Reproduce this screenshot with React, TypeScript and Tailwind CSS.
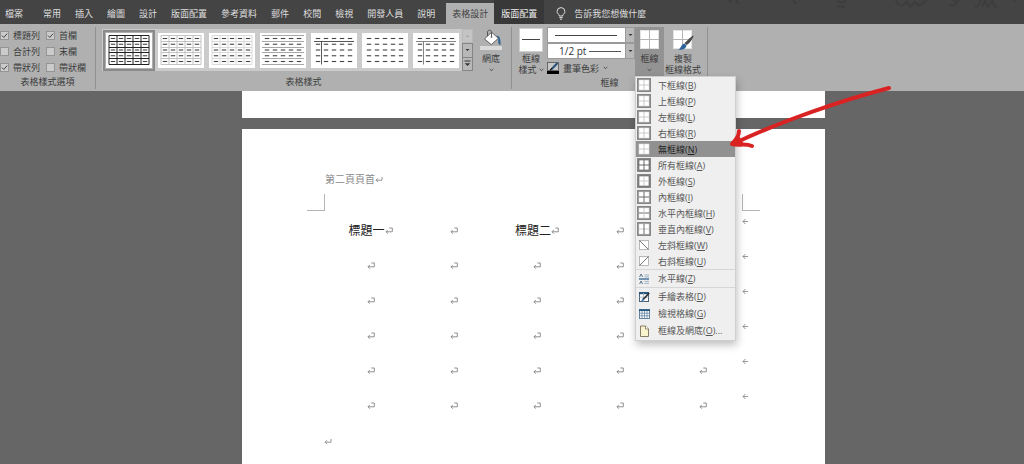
import { useState } from 'react'
import type { ReactNode } from 'react'

const MAIN_TABS = ['常用', '插入', '繪圖', '設計', '版面配置', '參考資料', '郵件', '校閱', '檢視', '開發人員', '說明']

const STYLE_OPTIONS = [
  { label: '標題列', checked: true },
  { label: '首欄', checked: true },
  { label: '合計列', checked: false },
  { label: '末欄', checked: false },
  { label: '帶狀列', checked: true },
  { label: '帶狀欄', checked: false },
]

type Grid = 'full' | 'light' | 'lighter' | 'rows' | 'header-first' | 'none' | 'header-first-light'

const TABLE_STYLES: Grid[] = ['full', 'light', 'lighter', 'rows', 'header-first', 'none', 'header-first-light']

type BorderKind = 'dotted' | 'outer' | 'all' | 'inner' | 'horizontal' | 'vertical' | 'none'

interface MenuEntry {
  label: string
  accessKey: string
  suffix?: string
  icon: ReactNode
  highlighted?: boolean
}

// Framed 2x2 cell icon used by most border commands
function BorderIcon({ kind }: { kind: BorderKind }) {
  const strong = '#5c5c5c'
  const weak = '#c4c4c4'
  const h = kind === 'all' || kind === 'inner' || kind === 'horizontal' ? strong : weak
  const v = kind === 'all' || kind === 'inner' || kind === 'vertical' ? strong : weak
  const edge = kind === 'all' || kind === 'outer' ? strong : '#e2e2e2'
  return (
    <svg width="14" height="14" viewBox="0 0 14 14" aria-hidden="true">
      <rect width="14" height="14" fill={kind === 'none' ? '#919191' : '#868686'} />
      <rect x="2" y="2" width="10" height="10" fill="#fff" stroke={edge} strokeWidth="0.6" />
      <path d="M2 7h10" stroke={h} strokeWidth="0.9" />
      <path d="M7 2v10" stroke={v} strokeWidth="0.9" />
    </svg>
  )
}

function DiagonalIcon({ down }: { down: boolean }) {
  return (
    <svg width="14" height="14" viewBox="0 0 14 14" aria-hidden="true">
      <rect x="2.5" y="2.5" width="9" height="9" fill="#fff" stroke="#a9a9a9" strokeWidth="0.8" />
      <path d={down ? 'M2.5 2.5l9 9' : 'M11.5 2.5l-9 9'} stroke="#666" strokeWidth="0.9" />
    </svg>
  )
}

function HorizontalLineIcon() {
  return (
    <svg width="14" height="14" viewBox="0 0 14 14" aria-hidden="true">
      <path d="M2 7h10" stroke="#2f6291" strokeWidth="1.3" />
      <path d="M2.6 5l1.5-3 1.5 3M2.6 12l1.5-3 1.5 3" fill="none" stroke="#47688a" strokeWidth="0.9" />
      <path d="M7.5 3H12M7.5 4.9H12M7.5 9.4H12M7.5 11.4H12" stroke="#8ba3ba" strokeWidth="0.8" />
    </svg>
  )
}

function DrawTableIcon() {
  return (
    <svg width="14" height="14" viewBox="0 0 14 14" aria-hidden="true">
      <rect x="2.5" y="2.5" width="9" height="9" fill="#fff" stroke="#4d6274" />
      <path d="M2 3.2h10" stroke="#24577f" strokeWidth="2" />
      <path d="M2.5 7.2h9M6.5 3v8.5" stroke="#9eb1c2" strokeWidth="0.8" />
      <path d="M12.2 3L6 9.6" stroke="#333" strokeWidth="1.7" />
      <path d="M6.5 9L4.8 10.9" stroke="#2a72b5" strokeWidth="1.4" />
    </svg>
  )
}

function GridlinesIcon() {
  return (
    <svg width="14" height="14" viewBox="0 0 14 14" aria-hidden="true">
      <rect x="2.5" y="2.5" width="10" height="9" fill="#fff" stroke="#527694" strokeWidth="0.9" />
      <path d="M2 3.2h11" stroke="#24577f" strokeWidth="1.7" />
      <path d="M5 4v7.5M7.5 4v7.5M10 4v7.5M3 6.2h9.5M3 8.8h9.5" stroke="#6287a5" strokeWidth="0.8" />
    </svg>
  )
}

function PageIcon() {
  return (
    <svg width="14" height="14" viewBox="0 0 14 14" aria-hidden="true">
      <path d="M3.5 2h5l3 3v7.5h-8z" fill="#fbf3cd" stroke="#77705a" strokeWidth="0.9" />
      <path d="M8.5 2v3h3" fill="#fff" stroke="#77705a" strokeWidth="0.8" />
    </svg>
  )
}

const MENU_SECTIONS: { roomy?: boolean; entries: MenuEntry[] }[] = [
  {
    entries: [
      { label: '下框線', accessKey: 'B', icon: <BorderIcon kind="dotted" /> },
      { label: '上框線', accessKey: 'P', icon: <BorderIcon kind="dotted" /> },
      { label: '左框線', accessKey: 'L', icon: <BorderIcon kind="dotted" /> },
      { label: '右框線', accessKey: 'R', icon: <BorderIcon kind="dotted" /> },
      { label: '無框線', accessKey: 'N', icon: <BorderIcon kind="none" />, highlighted: true },
      { label: '所有框線', accessKey: 'A', icon: <BorderIcon kind="all" /> },
      { label: '外框線', accessKey: 'S', icon: <BorderIcon kind="outer" /> },
      { label: '內框線', accessKey: 'I', icon: <BorderIcon kind="inner" /> },
    ],
  },
  {
    entries: [
      { label: '水平內框線', accessKey: 'H', icon: <BorderIcon kind="horizontal" /> },
      { label: '垂直內框線', accessKey: 'V', icon: <BorderIcon kind="vertical" /> },
      { label: '左斜框線', accessKey: 'W', icon: <DiagonalIcon down /> },
      { label: '右斜框線', accessKey: 'U', icon: <DiagonalIcon down={false} /> },
    ],
  },
  {
    roomy: true,
    entries: [{ label: '水平線', accessKey: 'Z', icon: <HorizontalLineIcon /> }],
  },
  {
    roomy: true,
    entries: [
      { label: '手繪表格', accessKey: 'D', icon: <DrawTableIcon /> },
      { label: '檢視格線', accessKey: 'G', icon: <GridlinesIcon /> },
      { label: '框線及網底', accessKey: 'O', suffix: '...', icon: <PageIcon /> },
    ],
  },
]

function Chevron() {
  return (
    <svg width="5" height="4" viewBox="0 0 5 4" aria-hidden="true">
      <path d="M0.7 1l1.8 1.6L4.3 1" fill="none" stroke="#444" strokeWidth="0.9" />
    </svg>
  )
}

// Faint doodles in the title area
function Doodles() {
  return (
    <svg className="ml-auto h-6 w-[310px]" viewBox="0 0 310 24" fill="none" stroke="#3d3d3d" strokeWidth="2" aria-hidden="true">
      <path d="M14 0l4 2M22 0l3 4M79 0l3 4M124 0c0 3 4 3 8 1M123 6l8 1M182 0c2 7 8 7 11 1l3 6 5-5 4 4 8-6" />
      <path d="M235 5c5 2 7-1 9-5M238 0l7 1M261 7c3 0 5-3 6-7M268 7l3-7 3 7 4-6 4 7M299 0l3 2" />
    </svg>
  )
}

function TabBar() {
  return (
    <header className="flex h-6 bg-[#444] text-[9px] leading-[14px] text-[#dedede]">
      <nav className="flex shrink-0 items-stretch" aria-label="功能區">
        <button className="pt-[3px] pr-[13px] pl-[5px]">檔案</button>
        {MAIN_TABS.map((tab) => (
          <button key={tab} className="px-[7px] pt-[3px]">
            {tab}
          </button>
        ))}
        <button className="mt-[3px] ml-1 bg-[#b0b0b0] px-1.5 text-[#404040]">表格設計</button>
        <button className="bg-[#383838] px-[7px] pt-[3px] text-[#eee]">版面配置</button>
        <button className="flex items-center gap-2 pt-[3px] pl-3">
          <svg width="10" height="13" viewBox="0 0 10 13" fill="none" stroke="#ddd" aria-hidden="true">
            <path d="M3.2 9V7.8C1.8 6.8 1.1 5.8 1.1 4.5a3.9 3.9 0 0 1 7.8 0c0 1.3-.7 2.3-2.1 3.3V9z" />
            <path d="M3.3 10.6h3.4M4 12.2h2" />
          </svg>
          告訴我您想做什麼
        </button>
      </nav>
      <Doodles />
    </header>
  )
}

function Group({ title, children }: { title: string; children: ReactNode }) {
  return (
    <section className="mt-[3px] mb-0.5 flex shrink-0 flex-col border-r border-[#919191]">
      <div className="flex h-[50px]">{children}</div>
      <h2 className="text-center leading-[14px]">{title}</h2>
    </section>
  )
}

function StyleOption({ label, checked }: { label: string; checked: boolean }) {
  const [on, setOn] = useState(checked)
  return (
    <label className="flex h-4 items-center gap-1">
      <span className="relative flex size-[9px]">
        <input
          type="checkbox"
          checked={on}
          onChange={() => setOn(!on)}
          className="size-[9px] appearance-none border border-[#949494] bg-[#cbcbcb]"
        />
        {on && (
          <svg className="pointer-events-none absolute inset-0" viewBox="0 0 9 9" fill="none" stroke="#444" aria-hidden="true">
            <path d="M2 4.6l1.8 1.8L7.2 2.6" />
          </svg>
        )}
      </span>
      {label}
    </label>
  )
}

function StyleThumb({ grid }: { grid: Grid }) {
  const cells = [0, 1, 2, 3, 4]
  const lineColor = grid === 'full' ? '#222' : grid === 'light' ? '#c2c2c2' : '#d9d9d9'
  const boxed = grid === 'full' || grid === 'light' || grid === 'lighter'
  const firstCol = grid === 'header-first' || grid === 'header-first-light'
  return (
    <svg width="46" height="35" viewBox="0 0 46 35" aria-hidden="true">
      <rect width="46" height="35" fill="#fff" />
      {boxed && (
        <path
          d="M3 2.5h40M3 8.5h40M3 14.5h40M3 19.5h40M3 25.5h40M3 31.5h40M3 2.5v29M11 2.5v29M19 2.5v29M27 2.5v29M35 2.5v29M43 2.5v29"
          stroke={lineColor}
          strokeWidth="1"
        />
      )}
      {grid === 'rows' && (
        <path d="M2 2.5h42M2 8.5h42M2 14.5h42M2 19.5h42M2 25.5h42M2 31.5h42" stroke="#8f8f8f" strokeWidth="0.8" />
      )}
      {firstCol && (
        <path d="M3 8.5h40M10.5 8.5v23" stroke={grid === 'header-first' ? '#444' : '#777'} strokeWidth="0.9" />
      )}
      {cells.map((r) =>
        cells.map((c) => (
          <path key={`${r}-${c}`} d={`M${4.8 + c * 8} ${5.5 + r * 5.75}h4.4`} stroke="#444" strokeWidth="1.1" />
        )),
      )}
    </svg>
  )
}

function StyleGallery() {
  return (
    <div className="mt-0.5 ml-1.5 flex h-[42px] bg-[#cbcbcb]">
      <div className="flex items-center gap-px px-px">
        {TABLE_STYLES.map((grid, i) => (
          <button
            key={grid}
            aria-label={`表格樣式 ${i + 1}`}
            className={`border-2 p-px ${i === 0 ? 'border-[#8a8a8a] bg-[#b0b0b0]' : '-mx-px border-transparent'}`}
          >
            <StyleThumb grid={grid} />
          </button>
        ))}
      </div>
      <div className="flex w-[11px] flex-col">
        <button aria-label="上一列" className="flex flex-1 items-center justify-center border border-[#b8b8b8] bg-[#c4c4c4]">
          <svg width="5" height="4" viewBox="0 0 5 4" fill="#a8a8a8"><path d="M0.5 3h4l-2-2z" /></svg>
        </button>
        <button aria-label="下一列" className="flex flex-1 items-center justify-center border border-[#858585] bg-[#b8b8b8]">
          <svg width="5" height="4" viewBox="0 0 5 4" fill="#333"><path d="M0.5 1h4l-2 2z" /></svg>
        </button>
        <button aria-label="其他" className="flex flex-1 items-center justify-center border border-t-0 border-[#858585] bg-[#b8b8b8]">
          <svg width="7" height="7" viewBox="0 0 7 7" fill="#333"><path d="M0.5 0.5h6v1h-6zM0.8 3.2h5.4L3.5 6z" /></svg>
        </button>
      </div>
    </div>
  )
}

function ShadingIcon() {
  return (
    <svg width="22" height="22" viewBox="0 0 22 22" aria-hidden="true">
      <rect y="17" width="22" height="4" fill="#d9d9d9" />
      <path d="M11.5 3.3l7 6-7.2 6.3L4.5 10z" fill="#fff" stroke="#555" strokeWidth="0.9" />
      <path d="M7.5 7V3c0-2.4 4-2.4 4 0v4.2" fill="none" stroke="#555" />
      <circle cx="11.5" cy="7.8" r="0.9" fill="#555" />
      <path d="M16.5 6.4c3 .4 4.3 2.4 4 9.6-2.6-.6-2.4-3-2.1-6.7z" fill="#2d5f8f" />
    </svg>
  )
}

function WindowIcon({ brush }: { brush?: boolean }) {
  return (
    <svg width="22" height="22" viewBox="0 0 22 22" aria-hidden="true">
      <rect x="1.5" y="1.5" width="18" height="18" fill="#fff" stroke="#e4e4e4" />
      <path d="M10.5 1v19M1 10.5h19" stroke="#b5b5b5" />
      {brush && (
        <>
          <path d="M21.5 6.5c.6 1-3.7 8-6.8 9.6l-2.2-1.9C14.5 12 20.8 5.7 21.5 6.500z" fill="#4a4a4a" />
          <path d="M12.3 14.5l2.3 2c-.6 3.3-4.6 5-8.3 4 2.6-.6 2.5-5 6-6z" fill="#2d629b" />
        </>
      )}
    </svg>
  )
}

function BordersMenu() {
  return (
    <div
      role="menu"
      className="absolute top-full left-0 z-10 w-[101px] border border-[#cfcfcf] bg-[#efefef] pb-px text-[#565656] shadow-[1px_4px_8px_rgba(0,0,0,0.25)]"
    >
      {MENU_SECTIONS.map((section, i) => (
        <div key={i} className={section.roomy ? 'border-t border-[#d6d6d6]' : ''}>
          {section.entries.map((entry) => (
            <button
              key={entry.accessKey}
              role="menuitem"
              className={`flex w-full items-center gap-[7px] pl-px text-left whitespace-nowrap ${
                section.roomy ? 'h-[17px]' : 'h-4'
              } ${entry.highlighted ? 'bg-[#919191] text-[#222]' : ''}`}
            >
              {entry.icon}
              <span>
                {entry.label}(<u>{entry.accessKey}</u>){entry.suffix}
              </span>
            </button>
          ))}
        </div>
      ))}
    </div>
  )
}

function LineSelect({ label, value, children }: { label: string; value: string; children: ReactNode }) {
  return (
    <div className="relative flex h-4 w-[88px] border border-[#9a9a9a] bg-white">
      <select aria-label={label} className="w-full appearance-none pl-[11px] text-[10px] leading-[14px] text-[#333]">
        <option>{value}</option>
      </select>
      {children}
      <span className="pointer-events-none absolute inset-y-0 right-0 flex w-[9px] items-center justify-center border-l border-[#9a9a9a] bg-[#b8b8b8]">
        <svg width="5" height="4" viewBox="0 0 5 4" fill="#333"><path d="M0.5 1h4l-2 2z" /></svg>
      </span>
    </div>
  )
}

function Ribbon() {
  const [menuOpen, setMenuOpen] = useState(true)

  return (
    <div className="flex h-[67px] bg-[#b0b0b0] text-[9px] leading-[11px] text-[#3c3c3c]">
      <Group title="表格樣式選項">
        <div className="grid grid-cols-[46px_49px] content-start">
          {STYLE_OPTIONS.map((option) => (
            <StyleOption key={option.label} {...option} />
          ))}
        </div>
      </Group>

      <Group title="表格樣式">
        <StyleGallery />
        <button className="mr-1.5 ml-1 flex w-7 flex-col items-center pt-0.5">
          <ShadingIcon />
          <span className="pt-0.5">網底</span>
          <span className="flex h-[11px] items-center"><Chevron /></span>
        </button>
      </Group>

      <Group title="框線">
        <button className="ml-1 flex w-[30px] flex-col items-center pt-px">
          <svg width="24" height="24" viewBox="0 0 24 24" aria-hidden="true">
            <rect x="0.5" y="0.5" width="23" height="23" fill="#fff" stroke="#d0d0d0" />
            <path d="M3 11.5h18" stroke="#444" />
          </svg>
          <span className="pt-px">框線</span>
          <span className="flex items-center gap-0.5 whitespace-nowrap">樣式<Chevron /></span>
        </button>

        <div className="ml-px flex flex-col">
          <LineSelect label="線條樣式" value="">
            <span className="pointer-events-none absolute top-[7px] right-[17px] h-px w-[62px] bg-[#444]" />
          </LineSelect>
          <LineSelect label="線條粗細" value="1/2 pt">
            <span className="pointer-events-none absolute top-[7px] right-[13px] h-px w-8 bg-[#555]" />
          </LineSelect>
          <button className="flex items-center gap-1 pt-[3px] whitespace-nowrap">
            <svg width="12" height="12" viewBox="0 0 12 12" aria-hidden="true">
              <rect x="0.5" y="0.5" width="11" height="8" fill="#c7c7c7" stroke="#555" strokeWidth="0.8" />
              <path d="M10.5 1L4.5 7.2" stroke="#24517a" strokeWidth="2" />
              <path d="M5 6.5L3 8.3" stroke="#111" strokeWidth="1.2" />
              <rect y="9" width="12" height="3" fill="#000" />
            </svg>
            畫筆色彩
            <Chevron />
          </button>
        </div>

        <div className="relative h-[49px]">
          <button
            aria-haspopup="menu"
            aria-expanded={menuOpen}
            onClick={() => setMenuOpen(!menuOpen)}
            className="flex h-full w-[29px] flex-col items-center bg-[#939393] pt-0.5"
          >
            <WindowIcon />
            <span className="pt-0.5">框線</span>
            <span className="flex h-[11px] items-center"><Chevron /></span>
          </button>
          {menuOpen && <BordersMenu />}
        </div>

        <button className="mr-[5px] flex w-[38px] flex-col items-center pt-0.5">
          <WindowIcon brush />
          <span className="pt-0.5">複製</span>
          <span className="whitespace-nowrap">框線格式</span>
        </button>
      </Group>
    </div>
  )
}

// Paragraph mark
function ParagraphMark() {
  return (
    <svg className="inline-block" width="8" height="8" viewBox="0 0 8 8" fill="none" stroke="#8a8a8a" strokeWidth="0.9" aria-hidden="true">
      <path d="M7 2v3.2H1M3 3.2L1 5.200l2 2" />
    </svg>
  )
}

// End-of-cell mark
function CellMark() {
  return (
    <svg className="inline-block" width="8" height="8" viewBox="0 0 8 8" fill="none" stroke="#858585" strokeWidth="0.9" aria-hidden="true">
      <path d="M4.3 1h3v3.8H1M2.8 3L1 4.8l1.8 1.9" />
    </svg>
  )
}

function RowMark() {
  return (
    <svg width="6" height="7" viewBox="0 0 6 7" fill="none" stroke="#8a8a8a" strokeWidth="0.9" aria-hidden="true">
      <path d="M6 3.5H1M3.4 1L1 3.5 3.4 6" />
    </svg>
  )
}

const HEADINGS = ['標題一', '', '標題二', '', '']
const BODY_ROWS = [1, 2, 3, 4, 5]

function DocumentPage() {
  return (
    <article className="mt-[11px] flex w-[583px] grow flex-col bg-white px-[65px] pt-[43px]">
      <p className="flex items-center pl-[18px] text-[10px] leading-[14px] text-[#8a8a8a]">
        第二頁頁首
        <ParagraphMark />
      </p>
      <div className="mt-2 flex justify-between">
        <span className="h-[17px] w-[18px] border-r border-b border-[#b5b5b5]" />
        <span className="h-[17px] w-[18px] border-b border-l border-[#b5b5b5]" />
      </div>
      <div className="mt-0.5 flex pl-[22px]">
        <table className="w-[416px] table-fixed text-center text-[12px] leading-4 text-[#222]">
          <thead>
            <tr className="h-[35px]">
              {HEADINGS.map((heading, i) => (
                <th key={i} className="p-0 font-normal">
                  <span className="inline-flex items-center">
                    {heading}
                    <CellMark />
                  </span>
                </th>
              ))}
            </tr>
          </thead>
          <tbody>
            {BODY_ROWS.map((row) => (
              <tr key={row} className="h-[35px]">
                {HEADINGS.map((_, i) => (
                  <td key={i} className="p-0">
                    <span className="inline-flex items-center">
                      <CellMark />
                    </span>
                  </td>
                ))}
              </tr>
            ))}
          </tbody>
        </table>
        <div className="-ml-1 flex flex-col pl-px">
          {[0, ...BODY_ROWS].map((row) => (
            <span key={row} className="flex h-[35px] pt-[5px]">
              <RowMark />
            </span>
          ))}
        </div>
      </div>
      <p className="flex h-[35px] items-center pl-[17px]">
        <ParagraphMark />
      </p>
    </article>
  )
}

function PointerArrow() {
  return (
    <svg
      className="pointer-events-none absolute top-[80px] left-[724px] z-20"
      width="172"
      height="76"
      viewBox="724 80 172 76"
      fill="none"
      stroke="#d92323"
      strokeLinecap="round"
      strokeLinejoin="round"
      aria-hidden="true"
    >
      <path d="M889 88C843 100 781 121 733 144" strokeWidth="4" />
      <path d="M739 131c0 5-3 9-7 13 6 2 13-1 20 2" strokeWidth="4" />
      <path d="M738 137l-5 7 9 0z" fill="#e01b1b" strokeWidth="3" />
    </svg>
  )
}

export default function App() {
  return (
    <div className="relative flex min-h-screen flex-col overflow-hidden bg-[#666] font-['Open_Sans','Noto_Sans_CJK_TC',sans-serif]">
      <TabBar />
      <Ribbon />
      <main className="flex grow flex-col items-center pl-[43px]">
        <div className="h-[27px] w-[583px] bg-white" />
        <DocumentPage />
      </main>
      <PointerArrow />
    </div>
  )
}
